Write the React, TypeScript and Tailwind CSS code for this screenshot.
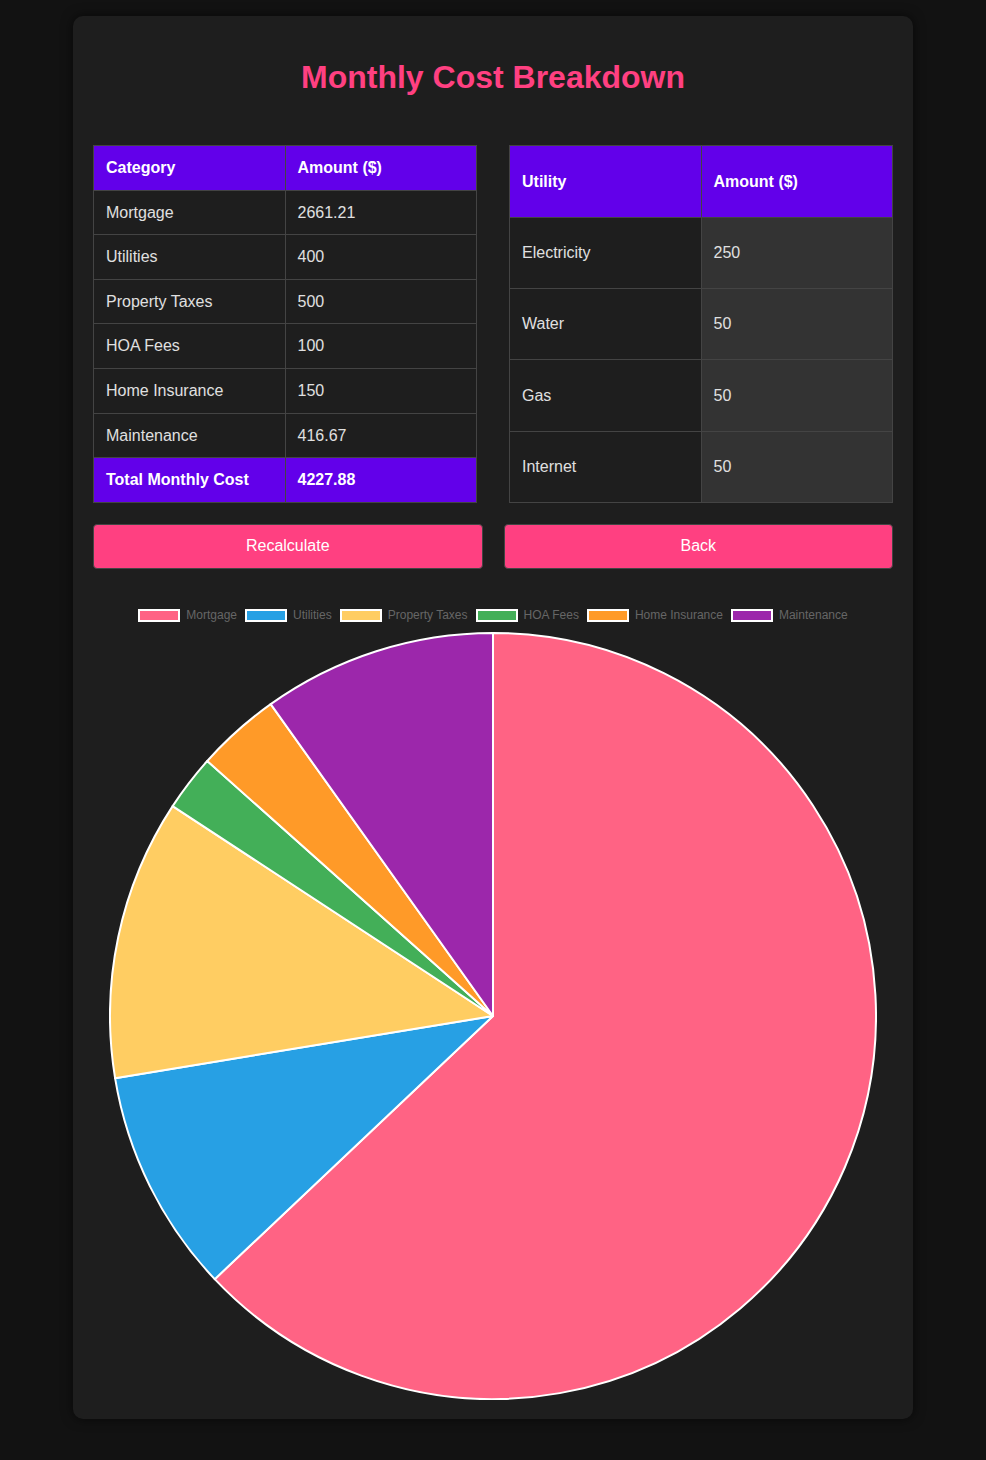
import React from "react";

const costs = [
  { label: "Mortgage", amount: "2661.21", value: 2661.21, color: "#ff6384" },
  { label: "Utilities", amount: "400", value: 400, color: "#27a0e4" },
  { label: "Property Taxes", amount: "500", value: 500, color: "#ffcd62" },
  { label: "HOA Fees", amount: "100", value: 100, color: "#43af58" },
  { label: "Home Insurance", amount: "150", value: 150, color: "#ff9a28" },
  { label: "Maintenance", amount: "416.67", value: 416.67, color: "#9c27ab" },
];

const utilities = [
  { name: "Electricity", amount: "250" },
  { name: "Water", amount: "50" },
  { name: "Gas", amount: "50" },
  { name: "Internet", amount: "50" },
];

// pie slices, starting at the top and going clockwise
function PieChart() {
  const r = 383;
  const c = 384;
  const total = costs.reduce((s, x) => s + x.value, 0);
  let start = -Math.PI / 2;

  return (
    <svg width="768" height="768" viewBox="0 0 768 768" className="block mx-auto">
      {costs.map((item) => {
        const sweep = (item.value / total) * Math.PI * 2;
        const end = start + sweep;
        const x1 = c + r * Math.cos(start);
        const y1 = c + r * Math.sin(start);
        const x2 = c + r * Math.cos(end);
        const y2 = c + r * Math.sin(end);
        const large = sweep > Math.PI ? 1 : 0;
        const d = `M ${c} ${c} L ${x1} ${y1} A ${r} ${r} 0 ${large} 1 ${x2} ${y2} Z`;
        start = end;
        return (
          <path
            key={item.label}
            d={d}
            fill={item.color}
            stroke="#ffffff"
            strokeWidth={2}
            strokeLinejoin="round"
          />
        );
      })}
    </svg>
  );
}

export default function App() {
  const cell = "border border-[#444] px-3 py-3 leading-[19.6px] text-left";

  return (
    <div
      className="min-h-screen bg-[#121212] pt-4 pb-10"
      style={{ fontFamily: '"Liberation Sans", Arial, sans-serif' }}
    >
      <div className="mx-auto w-[840px] rounded-[10px] bg-[#1e1e1e] px-5 pt-[21px] pb-[19px] shadow-[0_0_12px_rgba(0,0,0,0.6)]">
        <h1 className="pt-[22px] mb-[49px] text-center text-[32px] leading-[37px] font-bold text-[#ff4081]">
          Monthly Cost Breakdown
        </h1>

        <div className="flex justify-between text-base text-[#e0e0e0]">
          <div className="w-[48%]">
            <table className="w-full border-collapse">
              <thead>
                <tr className="bg-[#6200ea] text-white">
                  <th className={`${cell} w-1/2 font-bold`}>Category</th>
                  <th className={`${cell} w-1/2 font-bold`}>Amount ($)</th>
                </tr>
              </thead>
              <tbody>
                {costs.map((c) => (
                  <tr key={c.label}>
                    <td className={cell}>{c.label}</td>
                    <td className={cell}>{c.amount}</td>
                  </tr>
                ))}
                <tr className="bg-[#6200ea] text-white font-bold">
                  <td className={cell}>Total Monthly Cost</td>
                  <td className={cell}>4227.88</td>
                </tr>
              </tbody>
            </table>
          </div>

          <div className="w-[48%]">
            <table className="w-full border-collapse">
              <thead>
                <tr className="h-[72px] bg-[#6200ea] text-white">
                  <th className={`${cell} w-1/2 font-bold`}>Utility</th>
                  <th className={`${cell} w-1/2 font-bold`}>Amount ($)</th>
                </tr>
              </thead>
              <tbody>
                {utilities.map((u) => (
                  <tr key={u.name} className="h-[71.2px]">
                    <td className={cell}>{u.name}</td>
                    <td className={`${cell} bg-[#333]`}>{u.amount}</td>
                  </tr>
                ))}
              </tbody>
            </table>
          </div>
        </div>

        <div className="mt-[21px] grid grid-cols-2 gap-[21px]">
          <button className="h-[45px] rounded border border-[#444] bg-[#ff4081] text-base text-white">
            Recalculate
          </button>
          <button className="h-[45px] rounded border border-[#444] bg-[#ff4081] text-base text-white">
            Back
          </button>
        </div>

        <div className="mt-[40px] flex justify-center gap-[8px] text-[12px] leading-[13px] text-[#666]">
          {costs.map((c) => (
            <div key={c.label} className="flex items-center gap-[6px]">
              <span
                className="block h-[13px] w-[42px] border-2 border-white"
                style={{ backgroundColor: c.color }}
              />
              <span>{c.label}</span>
            </div>
          ))}
        </div>

        <div className="mt-[10px]">
          <PieChart />
        </div>
      </div>
    </div>
  );
}
